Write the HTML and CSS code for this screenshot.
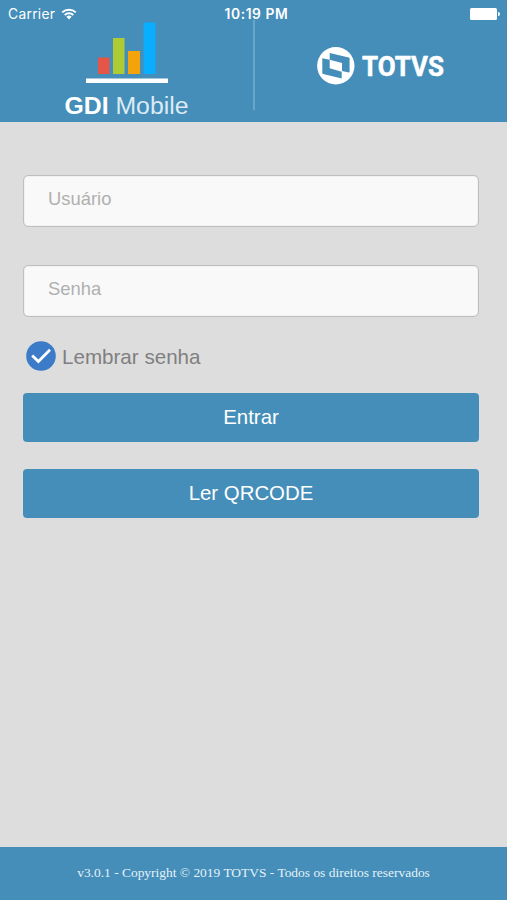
FILE: index.html
```html
<!DOCTYPE html>
<html lang="pt-BR">
<head>
    <meta charset="UTF-8">
    <meta name="viewport" content="width=device-width, initial-scale=1.0">
    <link rel="stylesheet" href="styles.css">
    <title>GDI Mobile</title>
</head>
<body>
    <header class="header">
        <div class="status">
            <div class="carrier">
                <span>Carrier</span>
                <svg width="16" height="12" viewBox="0 0 16 12">
                    <path d="M1.2 4.4a9.8 9.8 0 0 1 13.6 0M3.7 7a6.2 6.2 0 0 1 8.6 0" fill="none" stroke="#fff" stroke-width="2"/>
                    <path d="M5.4 8.8a3.8 3.8 0 0 1 5.2 0L8 11.4z" fill="#fff"/>
                </svg>
            </div>
            <span class="time">10:19 PM</span>
            <svg class="battery" width="30" height="12" viewBox="0 0 30 12">
                <rect width="27" height="12" rx="1.5" fill="#fff"/>
                <path d="M28 4a2 2 0 0 1 0 4z" fill="#fff"/>
            </svg>
        </div>
        <div class="brand">
            <svg class="chart" width="82" height="62" viewBox="0 0 82 62">
                <rect x="12" y="35.5" width="11.5" height="16.5" fill="#e55548"/>
                <rect x="27" y="16" width="11.5" height="36" fill="#aecb36"/>
                <rect x="42" y="29" width="12" height="23" fill="#f5a30a"/>
                <rect x="57.5" y="0.5" width="12" height="51.5" fill="#0aaeff"/>
                <rect x="0" y="56.5" width="82" height="4.5" fill="#fff"/>
            </svg>
            <div class="name"><b>GDI</b> Mobile</div>
        </div>
        <div class="divider"></div>
        <div class="company">
            <svg width="140" height="46" viewBox="0 0 140 46">
                <circle cx="18.8" cy="18.8" r="18.7" fill="#fff"/>
                <path d="M12.7 6l19 4.6q.9.2.9 1v13q0 1-.9.8L25 24v-8l-12.3-3.3z" fill="#448eb9"/>
                <path d="M5.3 11.3l7.4 1.4v8.6l12 3.4v6.8L6.2 27q-.9-.2-.9-1z" fill="#448eb9"/>
                <text class="totvs" x="45" y="29" textLength="82" lengthAdjust="spacingAndGlyphs">TOTVS</text>
            </svg>
        </div>
    </header>
    <main class="login">
        <input class="field" type="text" placeholder="Usuário">
        <input class="field" type="password" placeholder="Senha">
        <div class="remember">
            <svg width="30" height="30" viewBox="0 0 30 30">
                <circle cx="15" cy="15" r="14.8" fill="#3b7bc8"/>
                <path d="M6.2 14.4l6.2 6.2L24 8.8" fill="none" stroke="#fff" stroke-width="2.8"/>
            </svg>
            <span>Lembrar senha</span>
        </div>
        <button class="button">Entrar</button>
        <button class="button">Ler QRCODE</button>
    </main>
    <footer class="footer">v3.0.1 - Copyright © 2019 TOTVS - Todos os direitos reservados</footer>
</body>
</html>
```

FILE: styles.css
```css
*{
    box-sizing: border-box;
}
body{
    margin: 0;
    height: 900px;
    display: flex;
    flex-direction: column;
    background: #dddddd;
    font-family: "Liberation Sans", Arial, sans-serif;
}
svg{
    display: block;
}
.header{
    position: relative;
    display: flex;
    height: 122px;
    background: #448eb9;
    color: #fff;
}
/* status bar lies over the header */
.status{
    position: absolute;
    top: 0;
    left: 0;
    right: 0;
    display: grid;
    grid-template-columns: 1fr auto 1fr;
    align-items: center;
    height: 27px;
    padding: 0 7px 0 8px;
    font-family: Inter, sans-serif;
    font-size: 13.8px;
}
.carrier{
    display: flex;
    align-items: center;
    gap: 6px;
    letter-spacing: 0.3px;
}
.time{
    padding-left: 5px;
    font-weight: 600;
    letter-spacing: 0.6px;
}
.battery{
    justify-self: end;
}
.brand{
    width: 253px;
    padding-top: 22px;
}
.chart{
    margin: 0 auto;
}
.name{
    margin-top: 8px;
    text-align: center;
    font-size: 24.8px;
    line-height: 28px;
    color: #dcebf5;
}
.name b{
    color: #fff;
}
.divider{
    width: 2px;
    height: 90px;
    margin-top: 20px;
    background: #6ba6c9;
}
.company{
    padding: 47px 0 0 62px;
}
.totvs{
    font-family: Roboto, sans-serif;
    font-size: 28px;
    font-weight: 700;
    fill: #fff;
    stroke: #fff;
    stroke-width: 0.5px;
    stroke-linejoin: round;
}
.login{
    flex: 1;
    display: flex;
    flex-direction: column;
    padding: 53px 28px 0 23px;
}
.field{
    height: 52px;
    margin: 0 0 38px;
    padding: 0 24px 5px;
    border: 1px solid #bfbfbf;
    border-radius: 5px;
    background: #f9f9f9;
    box-shadow: inset 0 0 1px #aaa;
    font-family: inherit;
    font-size: 18.4px;
    outline: none;
}
.field::placeholder{
    color: #b0b0b0;
}
.remember{
    display: flex;
    align-items: center;
    gap: 6px;
    height: 30px;
    margin: -14px 0 22px 3px;
    font-size: 20.6px;
    color: #808080;
}
.remember span{
    padding-top: 2px;
}
.button{
    height: 49px;
    margin-bottom: 27px;
    padding: 0;
    border: 0;
    border-radius: 4px;
    background: #448eb9;
    color: #fff;
    font-family: inherit;
    font-size: 20.4px;
}
.footer{
    height: 53px;
    background: #448eb9;
    color: #e6f2fa;
    font-family: "Liberation Serif", "Times New Roman", serif;
    font-size: 13.45px;
    line-height: 51px;
    text-align: center;
}
```
